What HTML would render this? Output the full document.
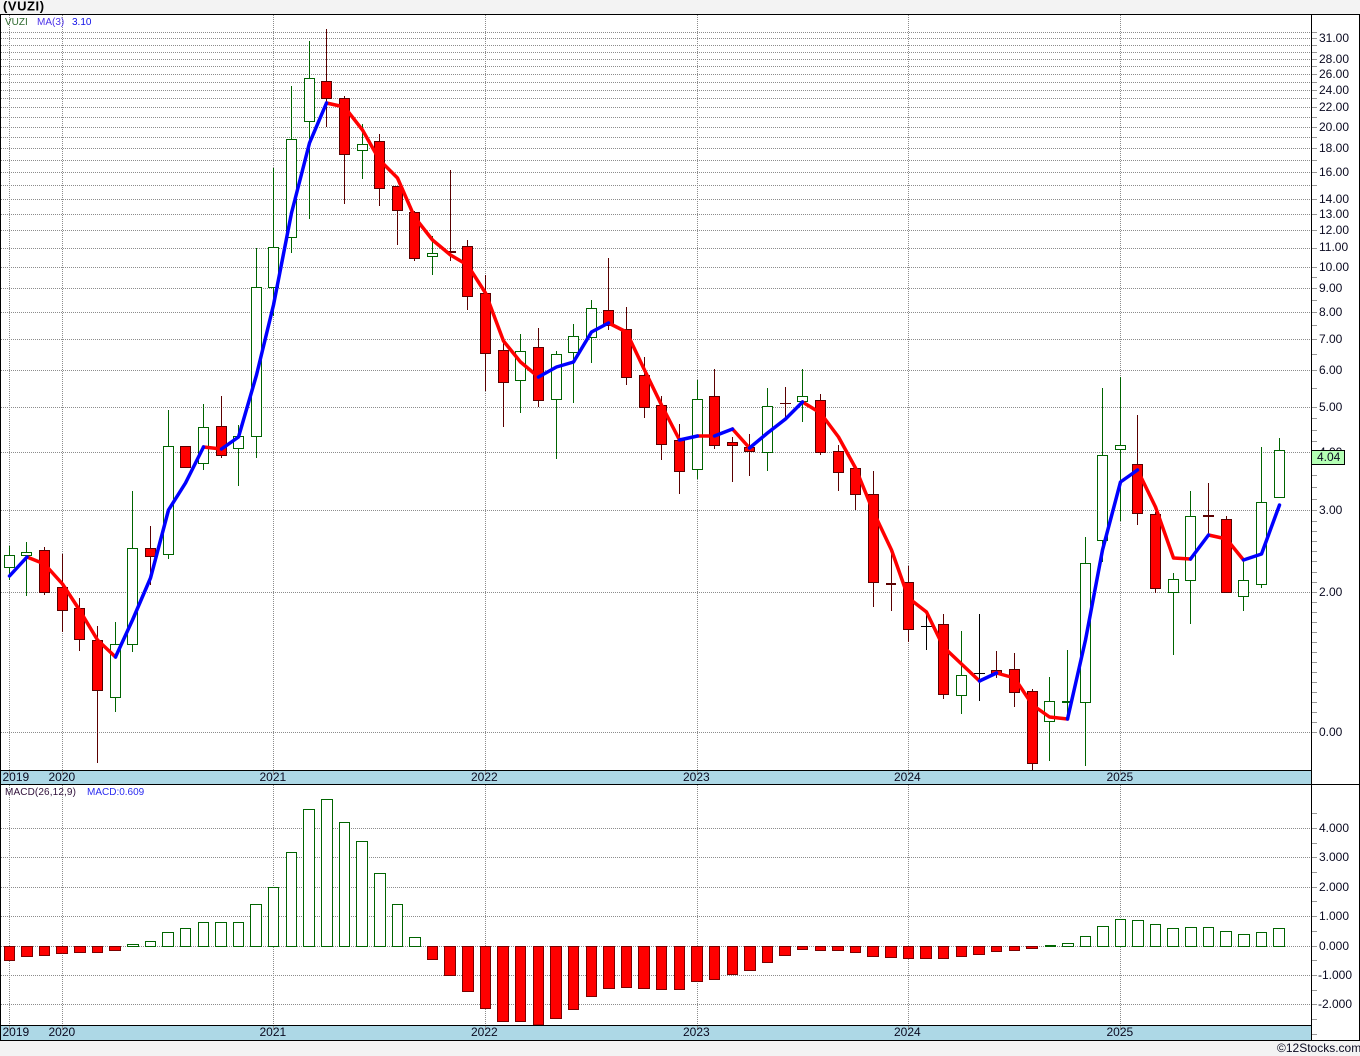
<!DOCTYPE html>
<html>
<head>
<meta charset="utf-8">
<title>VUZI</title>
<style>
html,body{margin:0;padding:0;background:#f3f3f3;}
svg{display:block;}
text{font-family:"Liberation Sans",sans-serif;font-size:12px;fill:#0a0a20;}
.s{font-size:10px;}
</style>
</head>
<body>
<svg xmlns="http://www.w3.org/2000/svg" width="1360" height="1056" viewBox="0 0 1360 1056">
<rect x="0" y="0" width="1360" height="1056" fill="#f3f3f3"/>
<rect x="0" y="14" width="1360" height="1027" fill="#fff"/>
<rect x="1" y="771" width="1310" height="13" fill="#add8e6"/>
<rect x="1" y="1026" width="1310" height="14" fill="#add8e6"/>

<!-- grid -->
<path fill="none" stroke="#8c8c8c" stroke-dasharray="1 1" d="M1 32.5H1311M1 38.5H1311M1 45.5H1311M1 52.5H1311M1 59.5H1311M1 66.5H1311M1 74.5H1311M1 82.5H1311M1 90.5H1311M1 98.5H1311M1 107.5H1311M1 117.5H1311M1 127.5H1311M1 137.5H1311M1 148.5H1311M1 160.5H1311M1 172.5H1311M1 185.5H1311M1 199.5H1311M1 214.5H1311M1 230.5H1311M1 248.5H1311M1 267.5H1311M1 288.5H1311M1 312.5H1311M1 339.5H1311M1 370.5H1311M1 407.5H1311M1 452.5H1311M1 510.5H1311M1 592.5H1311M1 732.5H1311
M1 828.5H1311M1 857.5H1311M1 887.5H1311M1 916.5H1311M1 946.5H1311M1 975.5H1311M1 1004.5H1311
M9.5 15V770M62.5 15V770M273.5 15V770M485.5 15V770M697.5 15V770M908.5 15V770M1120.5 15V770
M9.5 785V1025M62.5 785V1025M273.5 785V1025M485.5 785V1025M697.5 785V1025M908.5 785V1025M1120.5 785V1025"/>
<path fill="none" stroke="#999" d="M9.5 771V775M62.5 771V775M273.5 771V775M485.5 771V775M697.5 771V775M908.5 771V775M1120.5 771V775M9.5 1026V1030M62.5 1026V1030M273.5 1026V1030M485.5 1026V1030M697.5 1026V1030M908.5 1026V1030M1120.5 1026V1030"/>

<!-- axis ticks -->
<path fill="none" stroke="#999" d="M1312 32.5h5M1312 38.5h5M1312 45.5h5M1312 52.5h5M1312 59.5h5M1312 66.5h5M1312 74.5h5M1312 82.5h5M1312 90.5h5M1312 98.5h5M1312 107.5h5M1312 117.5h5M1312 127.5h5M1312 137.5h5M1312 148.5h5M1312 160.5h5M1312 172.5h5M1312 185.5h5M1312 199.5h5M1312 214.5h5M1312 230.5h5M1312 248.5h5M1312 267.5h5M1312 277.5h5M1312 288.5h5M1312 300.5h5M1312 312.5h5M1312 325.5h5M1312 339.5h5M1312 354.5h5M1312 370.5h5M1312 388.5h5M1312 407.5h5M1312 418.5h5M1312 430.5h5M1312 441.5h5M1312 452.5h5M1312 464.5h5M1312 475.5h5M1312 487.5h5M1312 499.5h5M1312 510.5h5M1312 521.5h5M1312 531.5h5M1312 541.5h5M1312 551.5h5M1312 561.5h5M1312 572.5h5M1312 582.5h5M1312 592.5h5M1312 602.5h5M1312 612.5h5M1312 622.5h5M1312 632.5h5M1312 642.5h5M1312 652.5h5M1312 662.5h5M1312 672.5h5M1312 682.5h5M1312 692.5h5M1312 702.5h5M1312 712.5h5M1312 722.5h5M1312 732.5h5
M1312 813.5h5M1312 828.5h5M1312 843.5h5M1312 857.5h5M1312 872.5h5M1312 887.5h5M1312 901.5h5M1312 916.5h5M1312 931.5h5M1312 946.5h5M1312 960.5h5M1312 975.5h5M1312 990.5h5M1312 1004.5h5M1312 1019.5h5M1312 1034.5h5"/>

<!-- wicks -->
<path fill="none" stroke="#006400" d="M9.5 546V580M26.5 542V596M115.5 622V712M132.5 491V652M168.5 410V559M203.5 404V470M238.5 425V486M256.5 248V458M273.5 168V316M291.5 86V253M309.5 41V219M362.5 124V179M432.5 236V275M520.5 334V413M556.5 351V459M573.5 324V403M591.5 300V363M697.5 380V479M767.5 388V471M802.5 369V422M961.5 631V714M1049.5 677V761M1067.5 650V719M1085.5 537V766M1102.5 388V562M1120.5 377V521M1173.5 573V655M1190.5 491V624M1243.5 560V611M1261.5 447V588M1279.5 438V497"/>
<path fill="none" stroke="#5a0000" d="M44.5 547V595M62.5 554V632M79.5 598V651M97.5 626V763M150.5 526V585M185.5 446V467M221.5 396V458M326.5 29V127M344.5 96V204M379.5 134V206M397.5 186V245M414.5 211V261M450.5 170V261M467.5 240V310M485.5 275V391M503.5 343V427M538.5 328V407M608.5 258V330M626.5 307V385M644.5 357V418M661.5 396V460M679.5 424V494M714.5 369V449M732.5 437V482M749.5 434V476M785.5 387V418M820.5 394V455M838.5 445V491M855.5 466V510M873.5 471V607M891.5 550V611M908.5 566V642M943.5 614V699M996.5 651V678M1014.5 653V707M1032.5 689V770M1137.5 415V525M1155.5 512V593M1208.5 483V535M1226.5 516V593"/>
<path fill="none" stroke="#000" d="M926.5 615V650M921 626.5H932M979.5 614V701M974 673.5H985"/>
<path fill="none" stroke="#5a0000" d="M780 403.5H791"/>
<path fill="none" stroke="#5a0000" stroke-width="2" d="M448 252H456M886 584H896M1203 516H1214"/>
<path fill="none" stroke="#006400" stroke-width="2" d="M1062 702H1072"/>

<!-- green bodies -->
<path fill="#fff" stroke="#006400" d="M4.5 555.5H14.5V567.5H4.5zM21.5 552.5H31.5V555.5H21.5zM110.5 644.5H120.5V697.5H110.5zM127.5 548.5H137.5V644.5H127.5zM163.5 446.5H173.5V554.5H163.5zM198.5 427.5H208.5V463.5H198.5zM233.5 436.5H243.5V448.5H233.5zM251.5 287.5H261.5V436.5H251.5zM268.5 247.5H278.5V287.5H268.5zM286.5 139.5H296.5V237.5H286.5zM304.5 78.5H314.5V121.5H304.5zM357.5 144.5H367.5V150.5H357.5zM427.5 253.5H437.5V256.5H427.5zM515.5 351.5H525.5V380.5H515.5zM551.5 354.5H561.5V399.5H551.5zM568.5 336.5H578.5V352.5H568.5zM586.5 308.5H596.5V337.5H586.5zM692.5 399.5H702.5V469.5H692.5zM762.5 406.5H772.5V452.5H762.5zM797.5 396.5H807.5V401.5H797.5zM956.5 675.5H966.5V695.5H956.5zM1044.5 701.5H1054.5V721.5H1044.5zM1080.5 563.5H1090.5V702.5H1080.5zM1097.5 455.5H1107.5V540.5H1097.5zM1115.5 445.5H1125.5V449.5H1115.5zM1168.5 579.5H1178.5V592.5H1168.5zM1185.5 516.5H1195.5V580.5H1185.5zM1238.5 580.5H1248.5V596.5H1238.5zM1256.5 502.5H1266.5V584.5H1256.5zM1274.5 450.5H1284.5V497.5H1274.5z"/>

<!-- red bodies -->
<path fill="#f00" stroke="#5a0000" d="M39.5 550.5H49.5V592.5H39.5zM57.5 587.5H67.5V610.5H57.5zM74.5 608.5H84.5V639.5H74.5zM92.5 640.5H102.5V690.5H92.5zM145.5 548.5H155.5V556.5H145.5zM180.5 446.5H190.5V467.5H180.5zM216.5 426.5H226.5V455.5H216.5zM321.5 81.5H331.5V98.5H321.5zM339.5 98.5H349.5V154.5H339.5zM374.5 141.5H384.5V188.5H374.5zM392.5 186.5H402.5V210.5H392.5zM409.5 212.5H419.5V258.5H409.5zM462.5 246.5H472.5V296.5H462.5zM480.5 293.5H490.5V353.5H480.5zM498.5 350.5H508.5V382.5H498.5zM533.5 347.5H543.5V400.5H533.5zM603.5 310.5H613.5V325.5H603.5zM621.5 329.5H631.5V377.5H621.5zM639.5 375.5H649.5V407.5H639.5zM656.5 405.5H666.5V444.5H656.5zM674.5 440.5H684.5V471.5H674.5zM709.5 396.5H719.5V445.5H709.5zM727.5 442.5H737.5V445.5H727.5zM744.5 447.5H754.5V451.5H744.5zM815.5 400.5H825.5V452.5H815.5zM833.5 451.5H843.5V472.5H833.5zM850.5 468.5H860.5V494.5H850.5zM868.5 494.5H878.5V582.5H868.5zM903.5 582.5H913.5V629.5H903.5zM938.5 624.5H948.5V694.5H938.5zM991.5 670.5H1001.5V673.5H991.5zM1009.5 669.5H1019.5V692.5H1009.5zM1027.5 691.5H1037.5V763.5H1027.5zM1132.5 464.5H1142.5V513.5H1132.5zM1150.5 514.5H1160.5V588.5H1150.5zM1221.5 519.5H1231.5V592.5H1221.5z"/>

<!-- MA lines -->
<g fill="none" stroke-width="3.5" stroke-linejoin="round" stroke-linecap="round">
<path stroke="#f00" d="M27 557L44.5 564L62.5 584L79.5 610L97.5 640L115.5 657M203.5 447L221.5 449M326.5 103L344.5 107L362.5 130L379.5 160L397.5 178L414.5 217L432.5 240L450.5 255L467.5 265L485.5 293L503.5 341L520.5 362L538.5 377M608.5 323L626.5 332L644.5 370L661.5 405L679.5 440M697.5 436L714.5 436M732.5 429L749.5 448M802.5 402L820.5 413L838.5 437L855.5 468L873.5 512L891.5 550L908.5 598L926.5 612L943.5 647L961.5 664L979.5 681M996.5 673L1014.5 678L1032.5 705L1049.5 717L1067.5 719M1137.5 470L1155.5 507L1173.5 558L1190.5 559M1208.5 535L1226.5 539L1243.5 560"/>
<path stroke="#00f" d="M9.5 576L27 557M115.5 657L132.5 620L150.5 578L168.5 510L185.5 483L203.5 447M221.5 449L238.5 437L256.5 375L273.5 305L291.5 213L309.5 143L326.5 103M538.5 377L556.5 367L573.5 362L591.5 332L608.5 323M679.5 440L697.5 436M714.5 436L732.5 429M749.5 448L767.5 433L785.5 419L802.5 402M979.5 681L996.5 673M1067.5 719L1085.5 640L1102.5 550L1120.5 482L1137.5 470M1190.5 559L1208.5 535M1243.5 560L1261.5 554L1279.5 505"/>
</g>

<!-- MACD green -->
<path fill="#fff" stroke="#006400" d="M127.5 944.5H138.5V946.5H127.5zM145.5 941.5H155.5V946.5H145.5zM162.5 932.5H173.5V946.5H162.5zM180.5 928.5H190.5V946.5H180.5zM198.5 922.5H208.5V946.5H198.5zM215.5 922.5H226.5V946.5H215.5zM233.5 922.5H243.5V946.5H233.5zM250.5 904.5H261.5V946.5H250.5zM268.5 887.5H278.5V946.5H268.5zM286.5 852.5H296.5V946.5H286.5zM303.5 809.5H314.5V946.5H303.5zM321.5 799.5H332.5V946.5H321.5zM339.5 822.5H349.5V946.5H339.5zM356.5 841.5H367.5V946.5H356.5zM374.5 873.5H385.5V946.5H374.5zM392.5 904.5H402.5V946.5H392.5zM409.5 937.5H420.5V946.5H409.5zM1045.5 945.5H1055.5V946.5H1045.5zM1062.5 943.5H1073.5V946.5H1062.5zM1080.5 936.5H1090.5V946.5H1080.5zM1097.5 926.5H1108.5V946.5H1097.5zM1115.5 919.5H1125.5V946.5H1115.5zM1132.5 920.5H1143.5V946.5H1132.5zM1150.5 924.5H1160.5V946.5H1150.5zM1167.5 928.5H1178.5V946.5H1167.5zM1185.5 927.5H1196.5V946.5H1185.5zM1203.5 927.5H1213.5V946.5H1203.5zM1220.5 931.5H1231.5V946.5H1220.5zM1238.5 934.5H1249.5V946.5H1238.5zM1256.5 932.5H1266.5V946.5H1256.5zM1273.5 928.5H1284.5V946.5H1273.5z"/>
<!-- MACD red -->
<path fill="#f00" stroke="#7a0000" d="M4.5 946.5H14.5V960.5H4.5zM21.5 946.5H32.5V956.5H21.5zM39.5 946.5H49.5V955.5H39.5zM56.5 946.5H67.5V953.5H56.5zM74.5 946.5H85.5V952.5H74.5zM92.5 946.5H102.5V952.5H92.5zM109.5 946.5H120.5V950.5H109.5zM427.5 946.5H437.5V959.5H427.5zM444.5 946.5H455.5V975.5H444.5zM462.5 946.5H473.5V991.5H462.5zM480.5 946.5H490.5V1008.5H480.5zM497.5 946.5H508.5V1021.5H497.5zM515.5 946.5H525.5V1021.5H515.5zM533.5 946.5H543.5V1025H533.5zM550.5 946.5H561.5V1018.5H550.5zM568.5 946.5H578.5V1009.5H568.5zM586.5 946.5H596.5V996.5H586.5zM603.5 946.5H614.5V988.5H603.5zM621.5 946.5H631.5V987.5H621.5zM638.5 946.5H649.5V988.5H638.5zM656.5 946.5H666.5V989.5H656.5zM674.5 946.5H684.5V989.5H674.5zM691.5 946.5H702.5V981.5H691.5zM709.5 946.5H719.5V979.5H709.5zM727.5 946.5H737.5V974.5H727.5zM744.5 946.5H755.5V970.5H744.5zM762.5 946.5H772.5V962.5H762.5zM779.5 946.5H790.5V955.5H779.5zM797.5 946.5H807.5V949.5H797.5zM815.5 946.5H825.5V950.5H815.5zM832.5 946.5H843.5V950.5H832.5zM850.5 946.5H860.5V952.5H850.5zM867.5 946.5H878.5V956.5H867.5zM885.5 946.5H896.5V957.5H885.5zM903.5 946.5H913.5V958.5H903.5zM920.5 946.5H931.5V958.5H920.5zM938.5 946.5H948.5V958.5H938.5zM956.5 946.5H966.5V956.5H956.5zM973.5 946.5H984.5V954.5H973.5zM991.5 946.5H1001.5V951.5H991.5zM1009.5 946.5H1019.5V950.5H1009.5zM1026.5 946.5H1037.5V948.5H1026.5z"/>

<!-- frame -->
<path fill="none" stroke="#000" d="M0 14.5H1360M0.5 14V1041M1311.5 14V1041M1359.5 14V1041M0 770.5H1311M0 784.5H1360M0 1025.5H1311M0 1040.5H1360"/>

<!-- text -->
<text x="3" y="10.5" style="font-size:13px;font-weight:bold;fill:#000;letter-spacing:.55px">(VUZI)</text>
<text class="s" x="5" y="25" style="fill:#2f6a2f">VUZI</text>
<text class="s" x="37" y="25" style="fill:#4a30e8">MA(3)</text>
<text class="s" x="72" y="25" style="fill:#1010e8">3.10</text>
<text class="s" x="5" y="795" style="fill:#30103a;letter-spacing:.12px">MACD(26,12,9)</text>
<text class="s" x="87" y="795" style="fill:#2a2af0">MACD:0.609</text>

<text x="1319" y="42">31.00</text>
<text x="1319" y="63">28.00</text>
<text x="1319" y="78">26.00</text>
<text x="1319" y="94">24.00</text>
<text x="1319" y="111">22.00</text>
<text x="1319" y="131">20.00</text>
<text x="1319" y="152">18.00</text>
<text x="1319" y="176">16.00</text>
<text x="1319" y="203">14.00</text>
<text x="1319" y="218">13.00</text>
<text x="1319" y="234">12.00</text>
<text x="1319" y="251">11.00</text>
<text x="1319" y="271">10.00</text>
<text x="1319" y="292">9.00</text>
<text x="1319" y="316">8.00</text>
<text x="1319" y="343">7.00</text>
<text x="1319" y="374">6.00</text>
<text x="1319" y="411">5.00</text>
<text x="1319" y="456">4.00</text>
<text x="1319" y="514">3.00</text>
<text x="1319" y="596">2.00</text>
<text x="1319" y="736">0.00</text>

<rect x="1311.5" y="450.5" width="33" height="14" fill="#b4ffb4" stroke="#000"/>
<text x="1317" y="461">4.04</text>

<text x="1319" y="832">4.000</text>
<text x="1319" y="861">3.000</text>
<text x="1319" y="891">2.000</text>
<text x="1319" y="920">1.000</text>
<text x="1319" y="950">0.000</text>
<text x="1318" y="979">-1.000</text>
<text x="1318" y="1008">-2.000</text>

<text x="2.5" y="781">2019</text>
<text x="48.5" y="781">2020</text>
<text x="259.5" y="781">2021</text>
<text x="471" y="781">2022</text>
<text x="683" y="781">2023</text>
<text x="894" y="781">2024</text>
<text x="1106.5" y="781">2025</text>

<text x="2.5" y="1036">2019</text>
<text x="48.5" y="1036">2020</text>
<text x="259.5" y="1036">2021</text>
<text x="471" y="1036">2022</text>
<text x="683" y="1036">2023</text>
<text x="894" y="1036">2024</text>
<text x="1106.5" y="1036">2025</text>

<text x="1277" y="1052">©12Stocks.com</text>
</svg>
</body>
</html>
